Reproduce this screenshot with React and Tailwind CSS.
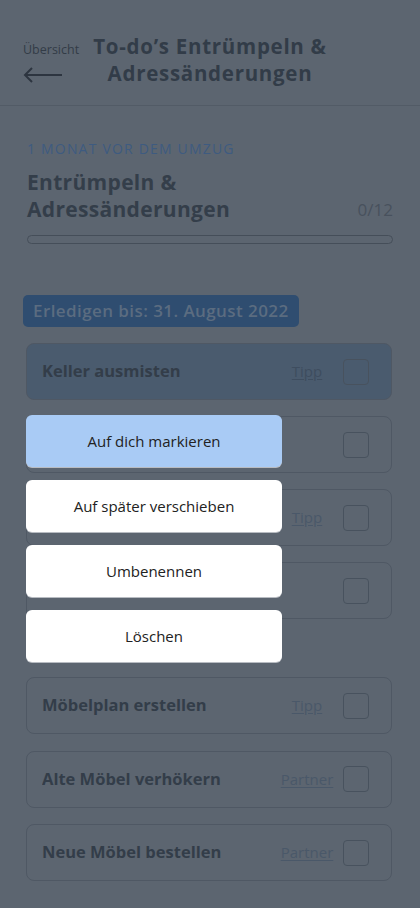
import React from 'react';

// Aufgabenliste der Gruppe (verdeckte Karten ohne sichtbaren Titel)
const tasks = [
    { id: 1, title: 'Keller ausmisten', link: 'Tipp', active: true },
    { id: 2, title: '', link: null },
    { id: 3, title: '', link: 'Tipp' },
    { id: 4, title: '', link: null },
];

const laterTasks = [
    { id: 5, title: 'Möbelplan erstellen', link: 'Tipp' },
    { id: 6, title: 'Alte Möbel verhökern', link: 'Partner' },
    { id: 7, title: 'Neue Möbel bestellen', link: 'Partner' },
];

const menuItems = [
    { label: 'Auf dich markieren', primary: true },
    { label: 'Auf später verschieben' },
    { label: 'Umbenennen' },
    { label: 'Löschen' },
];

const TaskCard = ({ task }) => (
    <div
        className={`flex items-center h-[57px] rounded-lg border border-[#4f5864] pl-[15px] pr-[22px] ${
            task.active ? 'bg-[#4a5b6e]' : ''
        }`}
    >
        <span className="flex-1 text-[16.5px] font-bold text-[#333d49] truncate">{task.title}</span>
        {task.link && (
            <span
                className={`w-[56px] text-center text-[15px] underline underline-offset-2 mr-[8px] ${
                    task.active ? 'text-[#3e4d5f]' : 'text-[#4a5869]'
                }`}
            >
                {task.link}
            </span>
        )}
        <span className="w-[26px] h-[26px] rounded-[4px] border border-[#48525e]" />
    </div>
);

const App = () => {
    return (
        <div className="relative w-[420px] min-h-[908px] bg-[#5c6570] font-['Open_Sans','Noto_Sans',sans-serif]">
            {/* Kopfzeile */}
            <header className="relative h-[106px] border-b border-[#525b66] flex items-center justify-center">
                <div className="absolute left-[23px] top-[44px] flex flex-col">
                    <span className="text-[12.5px] text-[#333c47] leading-none">Übersicht</span>
                    <svg width="40" height="16" viewBox="0 0 40 16" className="mt-[10px]">
                        <path d="M39 8H2M9 1L2 8l7 7" fill="none" stroke="#2d3540" strokeWidth="2" />
                    </svg>
                </div>
                <h1 className="text-center text-[20.5px] font-bold leading-[27px] tracking-[0.035em] text-[#323c48] pt-[14px]">
                    To-do’s Entrümpeln &amp;<br />Adressänderungen
                </h1>
            </header>

            <main className="px-[27px] pt-[32px]">
                <p className="text-[14px] text-[#3e5b80] uppercase tracking-[0.085em]">1 Monat vor dem Umzug</p>
                <div className="flex items-end justify-between mt-[10px]">
                    <h2 className="text-[21px] font-bold leading-[27px] tracking-[0.015em] text-[#343e4a]">
                        Entrümpeln &amp;<br />Adressänderungen
                    </h2>
                    <span className="text-[17px] text-[#48515d] mb-[1px]">0/12</span>
                </div>
                <div className="mt-[12px] h-[9px] rounded-full border border-[#454e59]" />
            </main>

            <section className="px-[23px] mt-[51px]">
                <div className="inline-flex items-center h-[32px] px-[10px] rounded-[5px] bg-[#2f4d70] text-[17px] font-semibold tracking-[0.025em] text-[#5b6c80]">
                    Erledigen bis: 31. August 2022
                </div>
            </section>

            <section className="pl-[26px] pr-[28px] mt-[16px]">
                <div className="flex flex-col gap-4">
                    {tasks.map(task => (
                        <TaskCard key={task.id} task={task} />
                    ))}
                </div>
                <div className="flex flex-col gap-[16.5px] mt-[58px]">
                    {laterTasks.map(task => (
                        <TaskCard key={task.id} task={task} />
                    ))}
                </div>
            </section>

            {/* Kontextmenü */}
            <div className="absolute left-[26px] top-[415px] w-[256px] flex flex-col gap-[13px]">
                {menuItems.map(item => (
                    <button
                        key={item.label}
                        className={`h-[52px] rounded-[6px] text-[15px] text-[#222] shadow-[0_1px_0_#b8bcc2] ${
                            item.primary ? 'bg-[#a9cbf5]' : 'bg-white'
                        }`}
                    >
                        {item.label}
                    </button>
                ))}
            </div>
        </div>
    );
};

export default App;
